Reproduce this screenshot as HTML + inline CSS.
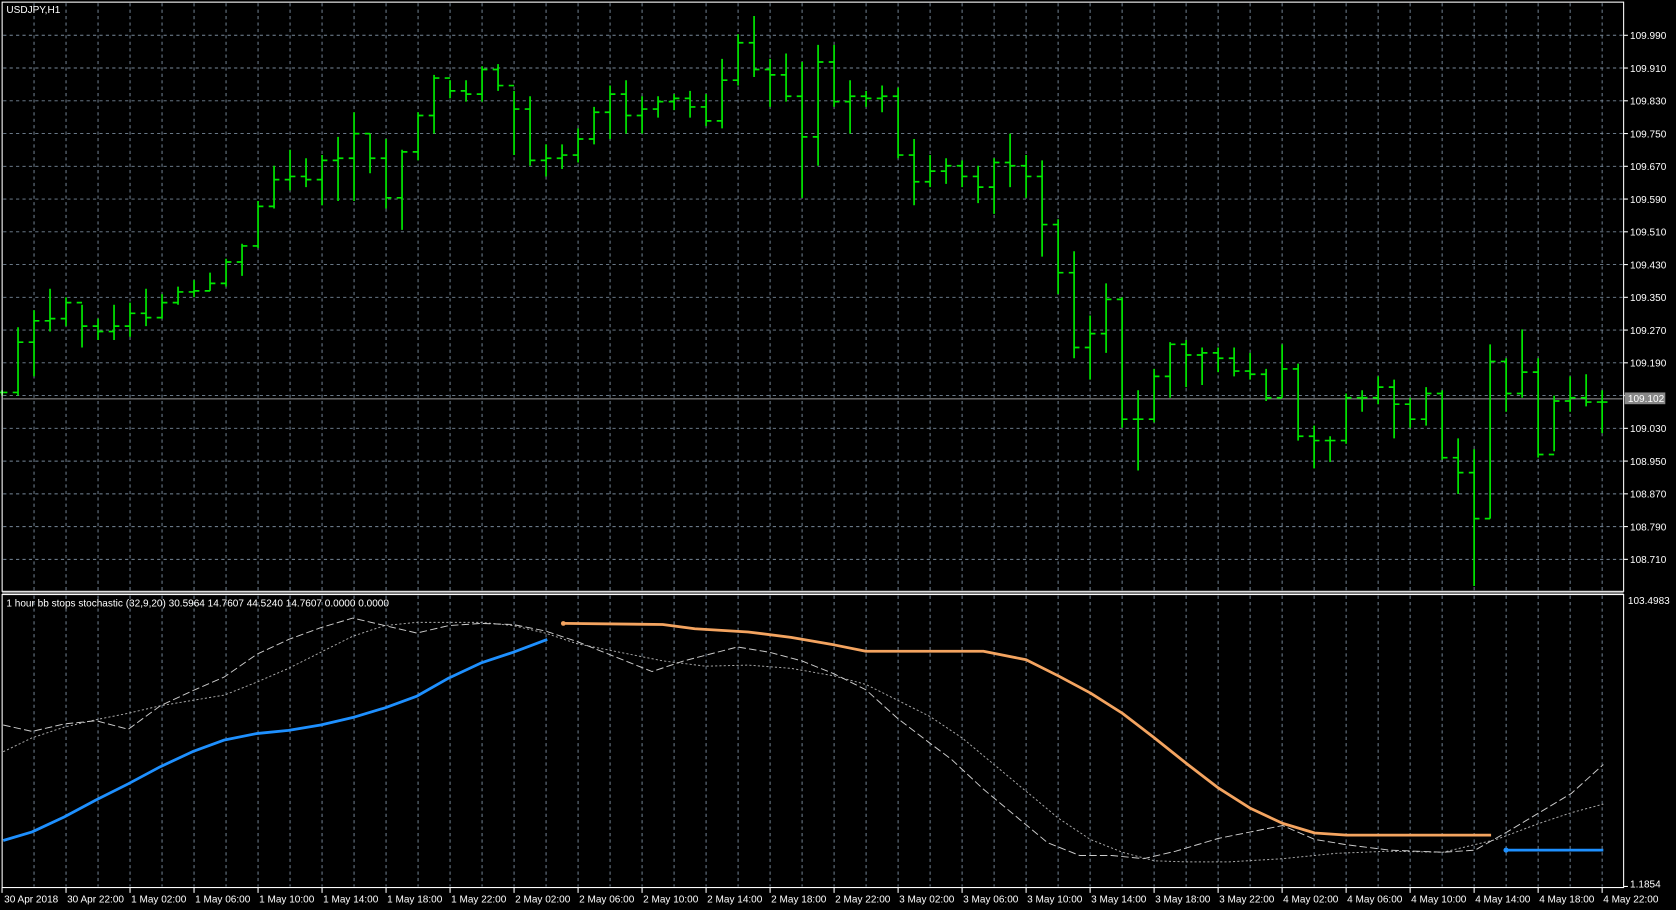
<!DOCTYPE html>
<html><head><meta charset="utf-8"><style>
html,body{margin:0;padding:0;background:#000;overflow:hidden}
svg{display:block}
text{font-family:"Liberation Sans",sans-serif;font-size:9.4px;fill:#fff}
</style></head><body>
<svg id="s" width="1676" height="910" viewBox="0 0 1568 851" preserveAspectRatio="none" xmlns="http://www.w3.org/2000/svg">
<rect width="1568" height="851" fill="#000"/>
<g id="grid"></g>
<g id="bars" stroke="#00e600" stroke-width="1.6" fill="none"></g>
<g id="ind" fill="none"></g>
<rect x="2" y="2" width="1517" height="551" fill="none" stroke="#fff" stroke-width="1"/>
<rect x="2" y="556" width="1517" height="274" fill="none" stroke="#fff" stroke-width="1"/>
<line x1="2" y1="554.5" x2="1519" y2="554.5" stroke="#999" stroke-width="1.5"/>
<text x="6" y="12">USDJPY,H1</text>
<text x="6" y="567">1 hour bb stops stochastic (32,9,20) 30.5964 14.7607 44.5240 14.7607 0.0000 0.0000</text>
<g id="axis"></g>
</svg>
<script>
const NS="http://www.w3.org/2000/svg";
function el(p,t,a,txt){const e=document.createElementNS(NS,t);for(const k in a)e.setAttribute(k,a[k]);if(txt)e.textContent=txt;document.getElementById(p).appendChild(e);return e;}
const gx=i=>1.9+14.97*i;
// vertical grid
for(let k=1;k<=50;k++){const x=1.9+29.94*k;if(x>1518)break;
 el('grid','line',{x1:x,y1:3,x2:x,y2:552,stroke:'#778899','stroke-width':0.9,'stroke-dasharray':'3,3'});
 el('grid','line',{x1:x,y1:557,x2:x,y2:829,stroke:'#778899','stroke-width':0.9,'stroke-dasharray':'3,3'});}
// horizontal grid + price labels
const prices=['109.990','109.910','109.830','109.750','109.670','109.590','109.510','109.430','109.350','109.270','109.190','109.110','109.030','108.950','108.870','108.790','108.710'];
prices.forEach((p,k)=>{const y=33+30.63*k;
 el('grid','line',{x1:3,y1:y,x2:1518,y2:y,stroke:'#778899','stroke-width':0.9,'stroke-dasharray':'3,3'});
 el('axis','line',{x1:1519,y1:y,x2:1523,y2:y,stroke:'#fff'});
 if(p!=='109.110')el('axis','text',{x:1525,y:y+3.5},p);});
// current price
el('grid','line',{x1:3,y1:373,x2:1518,y2:373,stroke:'#999','stroke-width':0.9});
el('axis','rect',{x:1520,y:367,width:38,height:11,fill:'#888'});
el('axis','text',{x:1523,y:376,fill:'#000'},'109.102');
el('axis','text',{x:1523,y:565},'103.4983');
el('axis','line',{x1:1519,y1:829,x2:1523,y2:829,stroke:'#fff'});
el('axis','text',{x:1525,y:830},'1.1854');
// time axis
const tl=['30 Apr 2018','30 Apr 22:00'];
const days=[['1 May',[2,6,10,14,18,22]],['2 May',[2,6,10,14,18,22]],['3 May',[2,6,10,14,18,22]],['4 May',[2,6,10,14,18,22]]];
days.forEach(d=>d[1].forEach(h=>tl.push(d[0]+' '+(h<10?'0':'')+h+':00')));
tl.forEach((t,k)=>{const x=1.9+59.88*k;
 el('axis','line',{x1:x,y1:830,x2:x,y2:835,stroke:'#fff'});
 el('axis','text',{x:x+(k==0?2:1),y:844},t);});
// bars [h,l,o,c]
const B=[[365,370,367,367],[306,370,367,320],[290,352,320,300],[270,310,300,298],[278,305,298,283],[285,325,283,305],[298,318,305,310],[285,318,310,305],[283,315,305,293],[270,305,293,297],[275,298,297,283],[268,285,283,273],[262,278,273,272],[255,272,272,265],[242,268,265,245],[228,258,245,230],[188,232,230,193],[155,195,193,168],[140,178,168,165],[148,175,165,168],[145,192,168,150],[128,188,150,148],[105,188,148,125],[125,162,125,148],[130,195,148,185],[140,215,185,142],[105,150,142,108],[70,125,108,73],[75,92,73,85],[75,95,85,88],[62,95,88,65],[60,85,65,80],[85,145,80,102],[90,155,102,150],[135,165,150,148],[135,158,148,145],[120,152,145,130],[100,135,130,105],[80,130,105,88],[75,125,88,108],[90,125,108,102],[90,110,102,95],[88,103,95,92],[85,110,92,100],[88,118,100,113],[55,120,113,75],[32,80,75,40],[15,72,40,65],[55,100,65,70],[50,95,70,90],[58,185,90,128],[42,155,128,58],[42,100,58,95],[75,125,95,90],[85,100,90,92],[80,105,92,90],[82,148,90,145],[130,192,145,170],[145,175,170,160],[148,172,160,155],[150,175,155,165],[155,190,165,175],[148,200,175,152],[125,175,152,155],[145,185,155,165],[150,240,165,210],[205,275,210,255],[235,335,255,325],[295,355,325,312],[265,330,312,280],[278,400,280,392],[365,440,392,392],[345,395,392,352],[320,372,352,322],[318,362,322,332],[325,360,332,330],[325,348,330,335],[325,352,335,347],[330,355,347,350],[345,375,350,372],[322,372,372,345],[340,412,345,408],[398,438,408,412],[408,432,412,412],[368,415,412,372],[365,385,372,372],[352,378,372,362],[355,410,362,378],[372,400,378,392],[362,398,392,368],[365,430,368,428],[410,462,428,442],[420,548,442,485],[322,485,485,338],[335,385,338,368],[308,372,368,348],[335,428,348,425],[370,422,425,375],[352,385,375,372],[350,380,372,376],[365,405,376,376]];
let d='';
B.forEach((b,i)=>{const x=gx(i);d+=`M${x} ${b[0]}V${b[1]}M${x-5} ${b[2]}H${x}M${x} ${b[3]}H${x+5}`;});
el('bars','path',{d:d});
const P=a=>'M'+a.map(p=>p.join(' ')).join('L');
const slow=[[3,703],[30,690],[60,680],[90,673],[120,667],[150,660],[180,655],[210,650],[240,638],[270,625],[300,610],[330,595],[360,585],[390,582],[420,582],[450,582],[480,585],[510,592],[540,602],[580,610],[620,618],[660,623],[700,622],[740,625],[780,632],[810,640],[840,655],[870,670],[900,690],[930,715],[960,740],[990,765],[1020,785],[1050,797],[1080,805],[1110,806],[1150,806],[1200,803],[1250,798],[1300,796],[1350,797],[1400,785],[1440,770],[1470,760],[1500,752]];
const fast=[[3,678],[30,684],[60,677],[90,674],[120,682],[150,660],[180,646],[210,633],[240,612],[270,598],[300,587],[330,578],[360,585],[390,592],[420,585],[450,583],[480,584],[510,590],[540,600],[570,612],[610,628],[640,618],[690,605],[720,610],[750,618],[780,630],[810,645],[840,672],[870,695],[890,710],[920,738],[950,763],[980,788],[1010,800],[1040,800],[1070,803],[1100,796],[1140,784],[1170,778],[1200,772],[1230,785],[1260,790],[1300,795],[1350,797],[1380,795],[1410,778],[1440,760],[1470,742],[1500,715]];
el('ind','path',{d:P(slow),stroke:'#aaa','stroke-width':0.9,'stroke-dasharray':'2,2'});
el('ind','path',{d:P(fast),stroke:'#ccc','stroke-width':0.9,'stroke-dasharray':'7,3'});
const blue=[[3,786],[30,778],[60,764],[90,748],[120,733],[150,717],[180,703],[210,692],[240,686],[270,683],[300,678],[330,671],[360,662],[390,651],[420,634],[450,620],[480,610],[512,598]];
el('ind','path',{d:P(blue),stroke:'#1e90ff','stroke-width':2.6,'stroke-linejoin':'round'});
const orange=[[527,583],[620,584],[650,588],[700,591],[740,596],[780,603],[810,609],[850,609],[920,609],[960,617],[990,632],[1020,648],[1050,667],[1080,690],[1110,714],[1140,737],[1170,756],[1200,770],[1230,779],[1260,781],[1395,781]];
el('ind','path',{d:P(orange),stroke:'#f4a460','stroke-width':2.6,'stroke-linejoin':'round'});
el('ind','circle',{cx:527,cy:583,r:2.2,fill:'#f4a460'});
el('ind','path',{d:'M1409 795H1500',stroke:'#1e90ff','stroke-width':2.6});
el('ind','circle',{cx:1409,cy:795,r:2.4,fill:'#1e90ff'});
</script>
</body></html>
